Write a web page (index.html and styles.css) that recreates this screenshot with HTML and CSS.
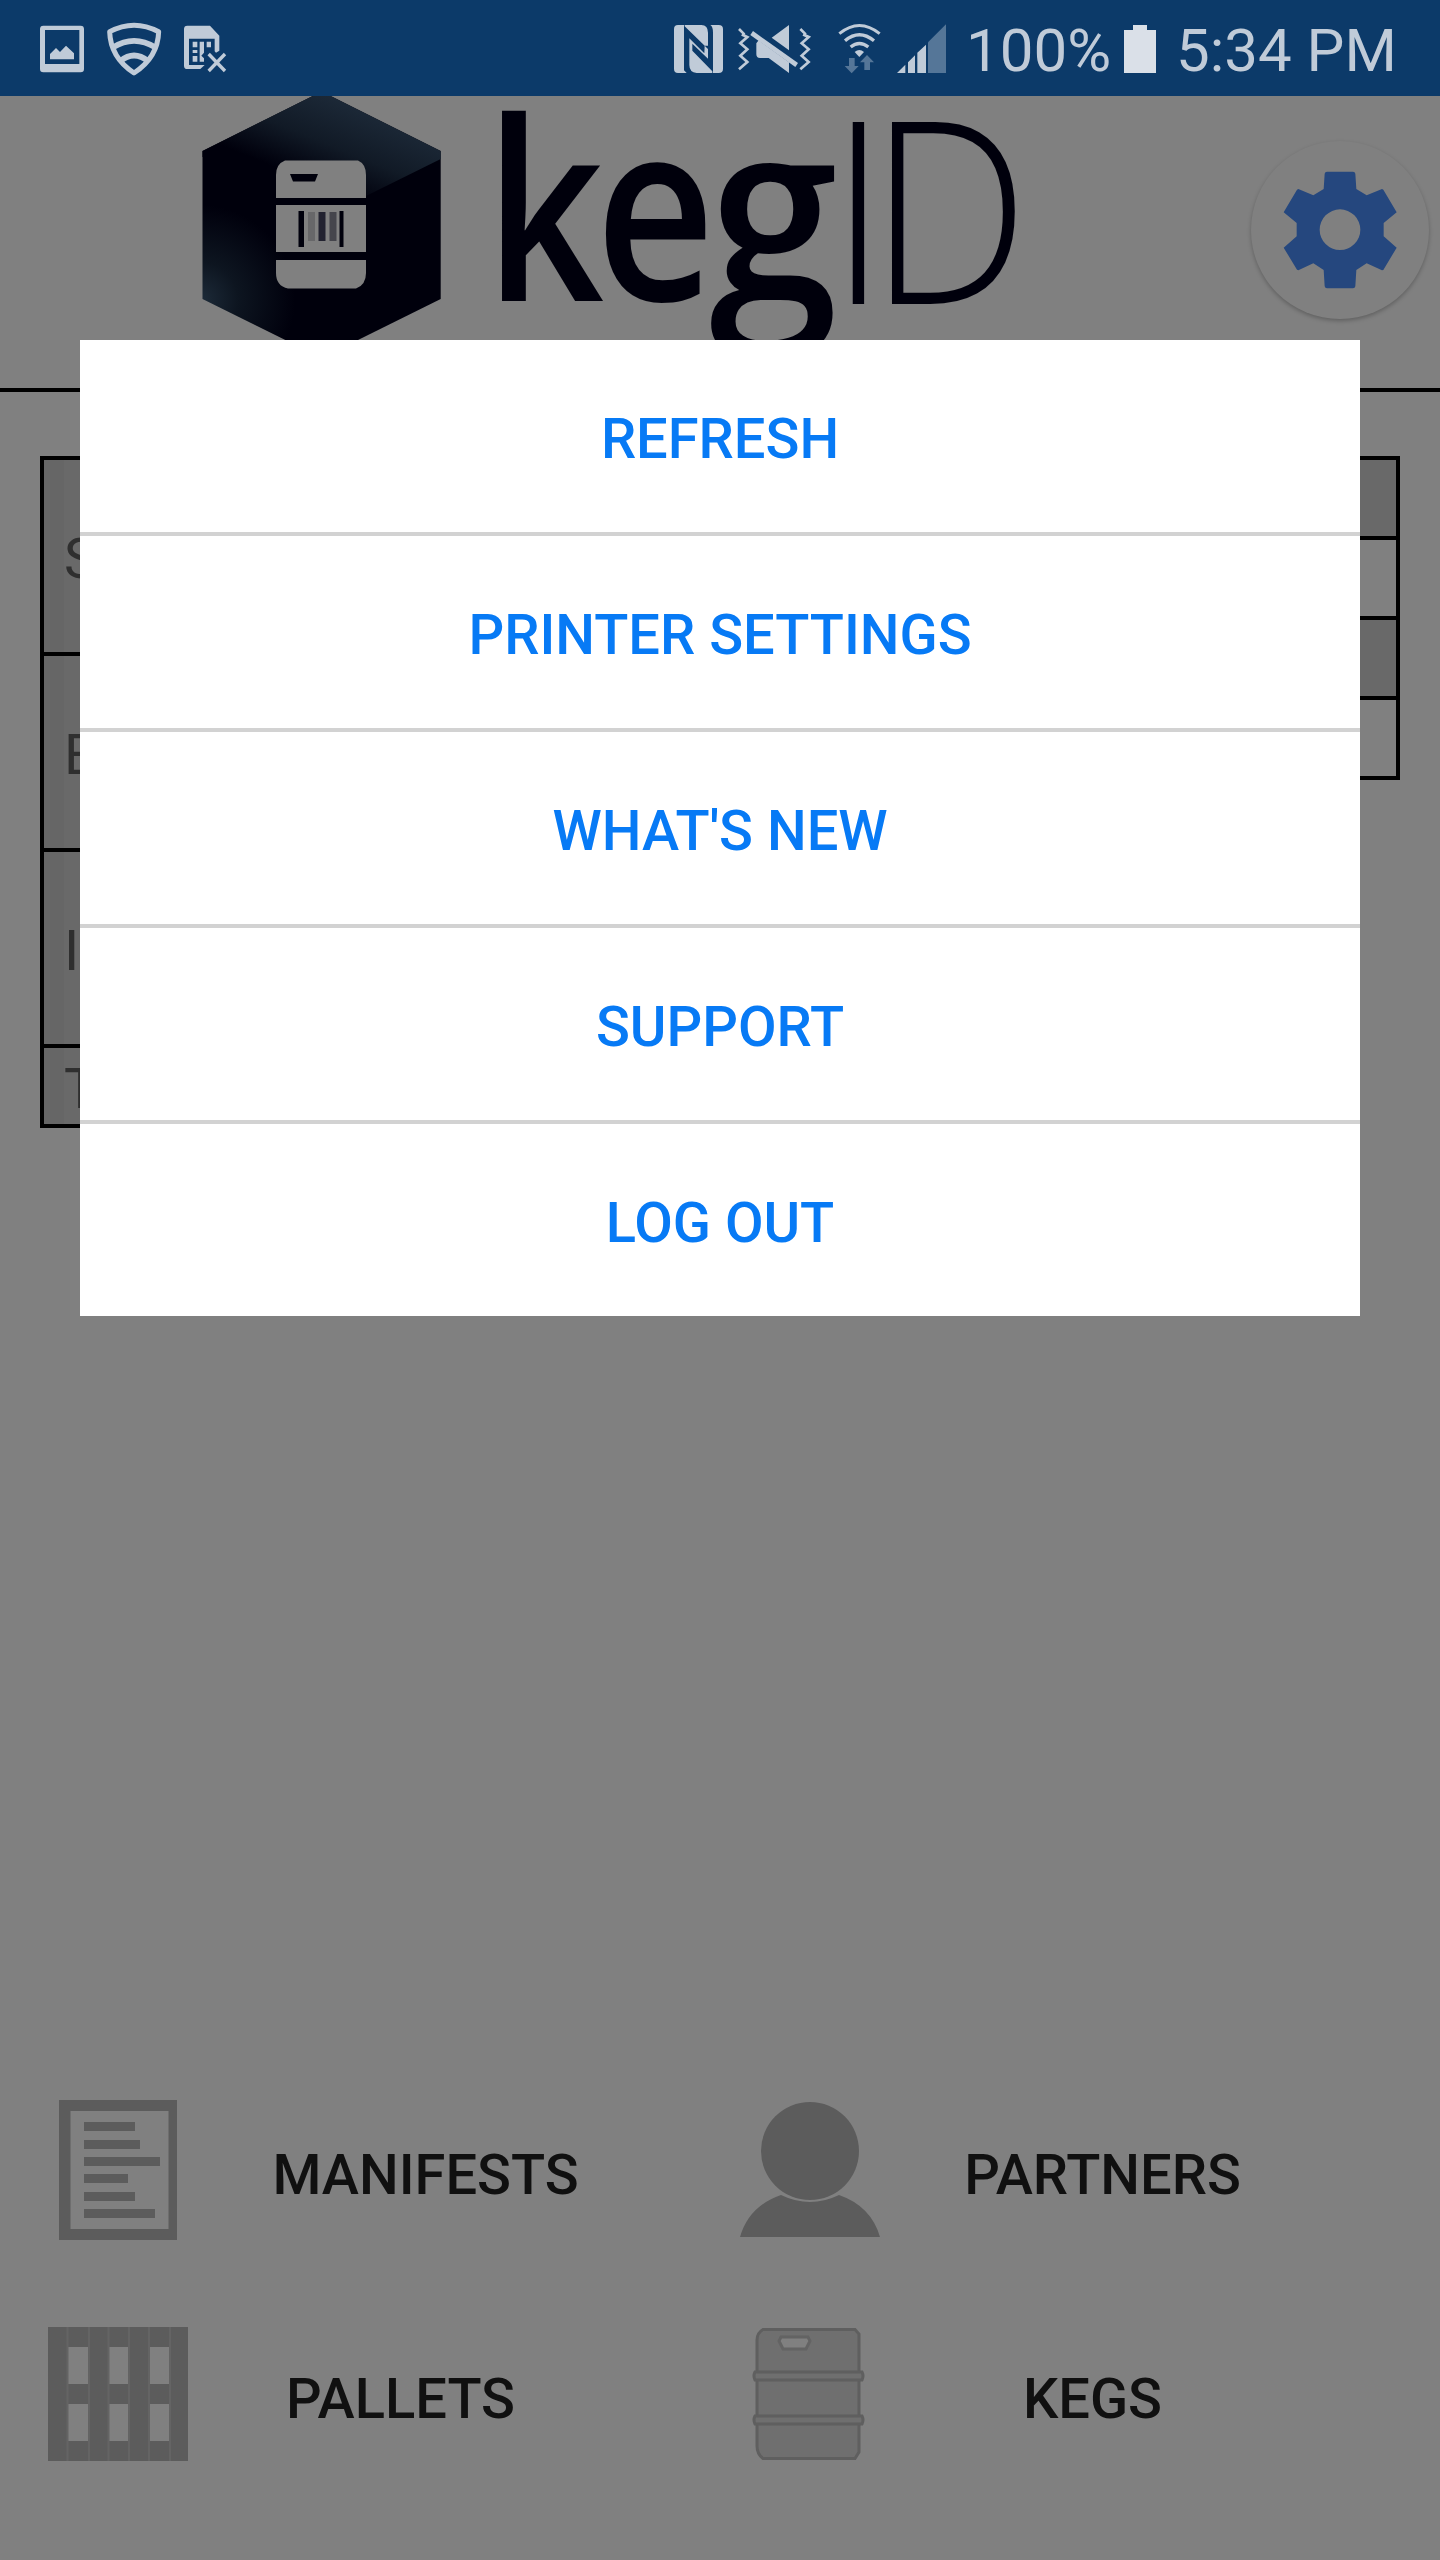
FILE: index.html
```html
<!DOCTYPE html>
<html lang="en">
<head>
<meta charset="utf-8">
<title>kegID</title>
<link rel="stylesheet" href="styles.css">
</head>
<body>
<div class="screen">
  <div class="status-bar">
    <div class="status-left">
      <svg width="46" height="96" viewBox="114 0 138 288"><path fill-rule="evenodd" d="M130 77H242Q252 77 252 87V207Q252 217 242 217H130Q120 217 120 207V87Q120 77 130 77ZM135 90V192H238V90ZM150 178V162L168 144L180 156L198 137L222 160V178Z"/></svg>
      <svg width="58" height="96" viewBox="312 0 174 288"><g class="line"><path stroke-width="15" stroke-linejoin="round" d="M329 95Q402 56 476 95Q474 172 402 219Q331 172 329 95Z"/><path stroke-width="17" d="M339 142Q402 103 466 142"/><path stroke-width="17" d="M361 183Q402 150 444 183"/></g></svg>
      <svg width="45" height="96" viewBox="546 0 135 288"><path fill-rule="evenodd" d="M562 77H630L658 107V152L648 158L644 154V116H567V195H614L601 207H562Q552 207 552 197V87Q552 77 562 77Z"/><path d="M578 125h14v17h-14zM578 150h14v9h-14zM578 168h14v17h-14zM599 125h13v33l-8 9l8 8v10h-13zM620 125h13v17h-13z"/><path class="line" stroke-width="10" d="M626 162L675 213M675 162L626 213"/></svg>
    </div>
    <div class="status-right">
      <svg width="49" height="96" viewBox="102 0 147 288"><path d="M114 75H132V211L140 219H114Q102 219 102 207V87Q102 75 114 75ZM134 75H184Q204 76 204 98V137L194 137L134 79ZM211 75H236Q249 75 249 87V207Q249 219 236 219H219V98Q219 80 211 75ZM148 115L193 160L194 137L204 147V176L157 131V152L217 214V219H170Q148 217 148 195Z"/></svg>
      <svg class="mute" width="74" height="96" viewBox="291 0 222 288"><path d="M447 75V151L395 113ZM356 121L447 187V219L386 174H360Q349 174 349 163V130Z"/><path class="line" stroke-width="14" d="M335 99L470 195"/><path class="line" stroke-width="8" d="M297 87L311 101L309 105L322 111L301 130L322 148L301 167L322 186L297 208M481 87L495 101L493 105L506 111L485 130L506 148L485 167L506 186L481 208"/></svg>
      <svg class="wifi" width="45" height="96" viewBox="591 0 135 288"><g class="line"><path stroke-width="9" d="M598 101Q658 52 719 101"/><path stroke-width="10" d="M615 122Q658 86 702 122"/><path stroke-width="10" d="M632 141Q658 120 685 141"/></g><path d="M644 156Q658 144 672 156L658 171Z"/><path class="dim" d="M627 174h17v24h12l-21 22l-21-22h13zM681 165l21 22h-12v23h-17v-23h-13z"/></svg>
      <svg class="signal" width="51" height="96" viewBox="768 0 153 288"><path d="M771 219L796 194V219ZM804 187L825 166V219H804ZM832 158L858 134V219H832Z"/><path class="dim" d="M864 127L918 73V219H864Z"/></svg>
      <span class="percent">100%</span>
      <svg class="battery" width="32" height="96" viewBox="282 0 96 288"><path d="M309 75H351V90H378V219H282V90H309Z"/></svg>
      <span class="clock">5:34 PM</span>
    </div>
  </div>

  <header class="header">
    <svg class="logo" width="820" height="292" viewBox="200 96 820 292">
      <defs>
        <linearGradient id="top" gradientUnits="userSpaceOnUse" x1="365" y1="105" x2="330" y2="190"><stop offset="0" stop-color="#1d2a39"/><stop offset=".55" stop-color="#111a26"/><stop offset="1" stop-color="#00000c"/></linearGradient>
        <radialGradient id="glow" gradientUnits="userSpaceOnUse" cx="200" cy="300" r="95"><stop offset="0" stop-color="#1d2b39"/><stop offset=".4" stop-color="#0d1520"/><stop offset="1" stop-color="#00000c"/></radialGradient>
      </defs>
      <path fill="url(#glow)" d="M321.700 91.500L440.700 151V299L321.700 358L202.500 299V151Z"/>
      <path fill="url(#top)" d="M321.700 91.500L440.700 151V159L366 196L277 178L202.500 157V151Z"/>
      <path class="keg-cut" d="M285 160.500H358Q366 164 366 175V198H276V175Q276 164 285 160.500ZM276 205H366V252H276ZM276 260H366V273Q366 285 356 288.500H288Q276 286 276 273Z"/>
      <path class="ink" d="M290 174H318L315 181.500H293ZM298.500 211h5.500v36h-5.500zM339.500 211h4v36h-4z"/>
      <path fill="#222230" d="M318.500 212h7v29h-7z"/><path fill="#45454c" d="M329.500 212h7v29h-7z"/><path fill="#676769" d="M308 212h7v29h-7z"/>
      <g class="wordmark">
        <text class="keg" dx="0 -10" transform="translate(485 301) scale(.83 1)">ke</text>
        <text class="keg" transform="translate(709 301) scale(.93 1)">g</text>
        <text class="id" dx="0 -20" transform="translate(830 304) scale(.89 1)">ID</text>
      </g>
    </svg>
    <div class="settings">
      <svg width="114" height="118" viewBox="249 214 342 354"><path fill-rule="evenodd" d="M381 216H459Q465 216 466 222L469 268L500 287L546 268L550 270L590 338L551 370V410L590 444L550 511L546 512L500 491L469 511L466 560Q465 566 459 566H381Q375 566 374 560L371 511L340 491L295 512L291 510L251 444L290 410V370L251 338L291 270L295 268L340 287L371 268L374 222Q375 216 381 216ZM420 329A61 61 0 1 0 420 451A61 61 0 1 0 420 329Z"/></svg>
    </div>
  </header>

  <main class="stats">
    <div class="stat-labels">
      <div class="stat">S</div>
      <div class="stat">E</div>
      <div class="stat">I</div>
      <div class="stat short">T</div>
    </div>
    <div class="stat-values">
      <div class="value head"></div>
      <div class="value"></div>
      <div class="value head"></div>
      <div class="value"></div>
    </div>
  </main>

  <nav class="nav">
    <div class="nav-item manifests">
      <svg width="140" height="140" viewBox="48 2100 140 140"><path fill-rule="evenodd" d="M59 2100H177V2240H59ZM70.500 2111V2229H168.500V2111Z"/><path d="M84 2122h51v9h-51zM84 2140h56v9h-56zM84 2157h76v9h-76zM84 2174h44v9h-44zM84 2192h51v9h-51zM84 2209h71v9h-71z"/></svg>
      <span>MANIFESTS</span>
    </div>
    <div class="nav-item partners">
      <svg width="140" height="140" viewBox="740 2100 140 140"><circle cx="810" cy="2151" r="49"/><path d="M781 2195Q810 2209 839 2195Q871 2206 880 2237H740Q749 2206 781 2195Z"/></svg>
      <span>PARTNERS</span>
    </div>
    <div class="nav-item pallets">
      <svg width="140" height="140" viewBox="48 2324 140 140"><path fill-rule="evenodd" d="M48 2327H188V2461H48ZM68 2347V2384H88V2347ZM108.500 2347V2384H128.500V2347ZM149 2347V2384H169.500V2347ZM68 2404V2441H88V2404ZM108.500 2404V2441H128.500V2404ZM149 2404V2441H169.500V2404Z"/><path class="seam" d="M67.500 2327v134M89 2327v134M108.500 2327v134M129 2327v134M149 2327v134M170 2327v134"/></svg>
      <span>PALLETS</span>
    </div>
    <div class="nav-item kegs">
      <svg width="140" height="140" viewBox="740 2324 140 140"><path class="shell" d="M763 2329.500H855L859 2334V2452L855 2458.500H763Q757 2454 757 2446V2340Q757 2333 763 2329.500Z"/><path class="shell" d="M755 2372H862Q864 2376 862 2380H755Q753 2376 755 2372ZM755 2416H862Q864 2420 862 2424H755Q753 2420 755 2416Z"/><path class="handle" d="M781 2337H808L810 2341L806 2349H783L779 2341Z"/></svg>
      <span>KEGS</span>
    </div>
  </nav>

  <div class="menu">
    <button>REFRESH</button>
    <button>PRINTER SETTINGS</button>
    <button>WHAT'S NEW</button>
    <button>SUPPORT</button>
    <button>LOG OUT</button>
  </div>
</div>
</body>
</html>
```

FILE: styles.css
```css
* { box-sizing: border-box; }
body { margin: 0; background: #808080; font-family: Roboto, sans-serif; }
svg { display: block; flex: none; }

.screen { position: relative; display: flex; flex-direction: column; width: 1440px; height: 2560px; overflow: hidden; }

.status-bar { display: flex; justify-content: space-between; height: 96px; padding: 0 42px 0 38px; background: #0c3a69; color: #c0cbd8; fill: #c0cbd8; }
.status-left { display: flex; gap: 20px; }
.status-right { display: flex; font-size: 60px; line-height: 102px; white-space: nowrap; }
.line { fill: none; stroke: #c0cbd8; }
.dim { fill: #557698; }
.mute { margin-left: 14px; }
.wifi { margin-left: 26px; }
.signal { margin-left: 14px; }
.percent { width: 152px; margin-left: 19px; }
.battery { margin-left: 6px; fill: #dae0e8; }
.clock { width: 222px; margin-left: 20px; }

.header { display: flex; justify-content: space-between; height: 296px; padding: 0 11px 0 200px; border-bottom: 4px solid #000; }
.ink { fill: #00000c; }
.keg-cut { fill: #808080; }
.wordmark { fill: #00000c; font-family: "Open Sans", sans-serif; font-size: 250px; }
.keg { font-weight: 600; }
.id { font-weight: 300; font-size: 254px; }
.settings { display: flex; align-items: center; justify-content: center; width: 178px; height: 178px; margin-top: 45px; border-radius: 50%; box-shadow: 0 2px 4px rgba(0, 0, 0, .25); fill: #25477e; }

.stats { display: flex; justify-content: space-between; align-items: flex-start; padding: 64px 40px 0; }
.stat-labels { width: 640px; border: 4px solid #000; }
.stat { display: flex; align-items: center; height: 196px; padding: 6px 0 0 20px; border-bottom: 4px solid #000; background: linear-gradient(90deg, #666 20px, #696969 20px); color: #2f2f2f; font-size: 56px; }
.stat.short { height: 76px; border-bottom: 0; }
.stat-values { width: 680px; border: 4px solid #000; }
.value { height: 80px; border-bottom: 4px solid #000; }
.value:last-child { height: 76px; border-bottom: 0; }
.value.head { background: #696969; }

.nav { display: grid; grid-template-columns: 692px 1fr; row-gap: 84px; margin-top: auto; padding: 0 0 96px 48px; fill: #5c5c5c; color: #101010; }
.nav-item { display: flex; align-items: center; height: 140px; font-size: 56px; font-weight: 500; white-space: nowrap; }
.nav-item span { padding-top: 10px; text-align: center; }
.manifests span { width: 475px; }
.partners span { width: 445px; }
.pallets span { width: 425px; }
.kegs span { width: 425px; }
.seam { fill: none; stroke: #646464; stroke-width: 2; }
.shell { fill: #6f6f6f; stroke: #5f5f5f; stroke-width: 3; }
.handle { fill: #808080; stroke: #636363; stroke-width: 3; }

.menu { position: absolute; top: 340px; left: 80px; display: flex; flex-direction: column; width: 1280px; background: #fff; }
.menu button { height: 196px; padding: 6px 0 0; border: 0; border-bottom: 4px solid #d2d2d2; background: #fff; color: #077af5; font: 500 56px Roboto, sans-serif; }
.menu button:last-child { height: 192px; border-bottom: 0; }
```
